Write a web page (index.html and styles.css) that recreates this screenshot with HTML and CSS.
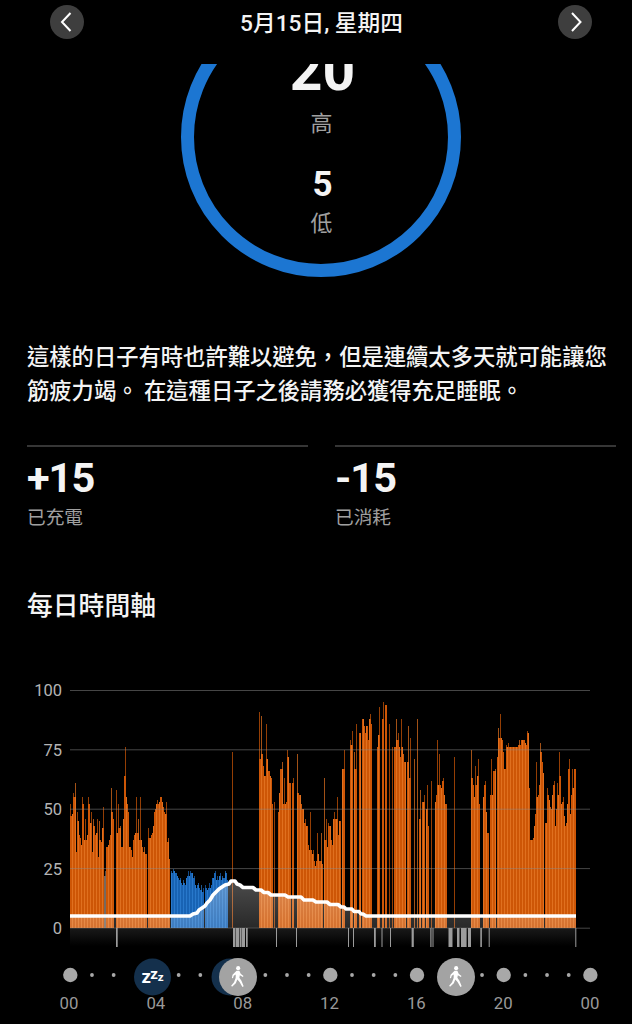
FILE: index.html
```html
<!DOCTYPE html>
<html lang="zh-Hant">
<head>
    <meta charset="UTF-8">
    <meta name="viewport" content="width=device-width, initial-scale=1.0">
    <title>每日時間軸</title>
    <link rel="stylesheet" href="styles.css">
</head>
<body>
    <header class="topbar">
        <button class="nav-button" aria-label="前一天">
            <svg width="34" height="34" viewBox="0 0 34 34"><path d="M20.5 8 L12 17 L20.5 26"/></svg>
        </button>
        <h1>5月15日, 星期四</h1>
        <button class="nav-button" aria-label="後一天">
            <svg width="34" height="34" viewBox="0 0 34 34"><path d="M14 8 L22.5 17 L14 26"/></svg>
        </button>
    </header>

    <section class="gauge">
        <div class="ring">
            <span class="high">20</span>
            <span class="caption">高</span>
            <span class="low">5</span>
            <span class="caption">低</span>
        </div>
    </section>

    <p class="message">這樣的日子有時也許難以避免，但是連續太多天就可能讓您筋疲力竭。 在這種日子之後請務必獲得充足睡眠。</p>

    <section class="totals">
        <div class="total">
            <strong>+15</strong>
            <span>已充電</span>
        </div>
        <div class="total">
            <strong>-15</strong>
            <span>已消耗</span>
        </div>
    </section>

    <h2>每日時間軸</h2>

    <section class="timeline">
        <div class="scale">
            <span>100</span>
            <span>75</span>
            <span>50</span>
            <span>25</span>
            <span>0</span>
        </div>
        <svg id="chart" width="524" height="320" viewBox="68 680 524 320">
            <defs>
                <linearGradient id="under_line" gradientUnits="userSpaceOnUse" x1="0" y1="880" x2="0" y2="928">
                    <stop offset="0" stop-color="#fff" stop-opacity="0.3"/>
                    <stop offset="1" stop-color="#fff" stop-opacity="0.16"/>
                </linearGradient>
                <linearGradient id="below_zero" x1="0" y1="0" x2="0" y2="1">
                    <stop offset="0" stop-color="#181818"/>
                    <stop offset="1" stop-color="#000"/>
                </linearGradient>
                <symbol id="walker" viewBox="0 0 20 24">
                    <circle cx="10.7" cy="2.8" r="2.2"/>
                    <path d="M9 5.6 L12 5.6 L13.4 8.8 L16.4 11.2 L15.7 12.2 L12.5 10.3 L12 13 L14.2 16.3 L16.6 22.2 L15.2 22.8 L12.2 17.6 L9.8 15 L8.2 18.8 L4.2 22.6 L3.2 21.6 L6.3 17.8 L8 13.2 L8.1 9.6 L6 10.8 L5.2 13.6 L4 13.4 L4.7 9.8 Z"/>
                </symbol>
            </defs>
            <rect x="70" y="929" width="506" height="17" fill="url(#below_zero)"/>
            <g id="bars" shape-rendering="crispEdges"></g>
            <g class="grid">
                <path d="M70 690.5H590M70 749.8H590M70 809.2H590M70 868.6H590M70 928.2H590"/>
            </g>
            <g id="ticks"></g>
            <g id="energy"></g>
            <g id="dots"></g>
            <circle cx="152.5" cy="977" r="18.5" class="sleep"/>
            <g class="zzz">
                <text x="141.5" y="983" font-size="18.5">z</text>
                <text x="150.3" y="978.7" font-size="15">z</text>
                <text x="157.8" y="981" font-size="11.5">z</text>
            </g>
            <circle cx="230" cy="977" r="18.5" class="sleep"/>
            <circle cx="238" cy="977" r="19" class="walk"/>
            <use href="#walker" x="227.5" y="965.5" width="20" height="22.5" fill="#fff"/>
            <circle cx="456" cy="977" r="19" class="walk"/>
            <use href="#walker" x="445.5" y="965.5" width="20" height="22.5" fill="#fff"/>
        </svg>
    </section>

    <div class="hours">
        <span>00</span>
        <span>04</span>
        <span>08</span>
        <span>12</span>
        <span>16</span>
        <span>20</span>
        <span>00</span>
    </div>

    <script src="chart.js"></script>
</body>
</html>
```

FILE: styles.css
```css
* {
    box-sizing: border-box;
}

body {
    margin: 0;
    height: 1024px;
    overflow: hidden;
    background-color: #000;
    color: #f4f4f4;
    font-family: Roboto, "Noto Sans CJK TC", sans-serif;
}

.topbar {
    display: flex;
    align-items: center;
    justify-content: space-between;
    height: 64px;
    padding: 0 40px 21px 50px;
}

.topbar h1 {
    margin: 0;
    padding: 4px 0 0 1px;
    font-size: 22.7px;
    line-height: 34px;
    font-weight: 500;
}

.nav-button {
    width: 34px;
    height: 34px;
    padding: 0;
    border: none;
    border-radius: 50%;
    background-color: #3e3e3e;
}

.nav-button svg {
    display: block;
    fill: none;
    stroke: #fff;
    stroke-width: 2;
}

.gauge {
    height: 276px;
    overflow: hidden;
}

.ring {
    display: flex;
    flex-direction: column;
    align-items: center;
    width: 280px;
    height: 280px;
    margin: -67px 0 0 181px;
    padding-top: 31px;
    border: 13px solid #1c76d2;
    border-radius: 50%;
}

.high {
    height: 66px;
    font-size: 57px;
    line-height: 60px;
    font-weight: 700;
    padding-left: 3px;
}

.low {
    margin-top: 23px;
    height: 43px;
    font-size: 35px;
    line-height: 42px;
    font-weight: 700;
    padding-left: 3px;
}

.caption {
    height: 34px;
    padding-left: 1px;
    font-size: 22px;
    line-height: 34px;
    color: #a0a0a0;
}

.message {
    margin: 0 20px 0 27px;
    font-size: 22.3px;
    line-height: 34px;
    font-weight: 500;
    height: 105px;
}

.totals {
    display: grid;
    grid-template-columns: 281px 281px;
    gap: 27px;
    margin-left: 27px;
}

.total {
    display: flex;
    flex-direction: column;
    height: 143px;
    border-top: 2px solid #363636;
}

.total strong {
    padding-top: 6px;
    font-size: 41.5px;
    line-height: 50px;
    letter-spacing: -1px;
}

.total span {
    font-size: 18.7px;
    line-height: 30px;
    color: #a0a0a0;
}

h2 {
    margin: 0 0 0 27px;
    height: 92px;
    padding-top: 1px;
    font-size: 25.8px;
    line-height: 34px;
    font-weight: 500;
}

.timeline {
    display: flex;
    gap: 6px;
    height: 310px;
}

.scale {
    display: flex;
    flex-direction: column;
    justify-content: space-between;
    width: 62px;
    height: 259px;
    padding-top: 1px;
    text-align: right;
    font-size: 16.5px;
    line-height: 20px;
    color: #b4b4b4;
}

#chart {
    overflow: visible;
}

.grid path {
    stroke: #8c8c8c;
    stroke-opacity: 0.5;
    fill: none;
}

.sleep {
    fill: #14304c;
}

.walk {
    fill: #a3a3a3;
}

.zzz {
    fill: #fff;
    font-weight: 700;
}

.hours {
    display: flex;
    justify-content: space-between;
    width: 541px;
    margin-left: 59px;
    padding-top: 3px;
    font-size: 16.8px;
    line-height: 20px;
    color: #999;
}

.hours span {
    width: 20px;
    text-align: center;
}
```

FILE: chart.js
```javascript
const SVG_NS = "http://www.w3.org/2000/svg";
const ZERO = 928;
const UNIT = 2.377;

// start position, then one stress level per step; 0 is a gap
const stress = [
    [70, 52, 47, 48, 57, 55, 61, 32, 49, 45, 39, 38, 35, 55, 52, 37, 46, 37, 39, 55, 52, 44, 49, 32, 46, 43, 39, 40, 46, 30, 45, 37, 36, 42, 51],
    [106, 34, 34, 35, 37, 39, 59, 49, 46, 0, 0, 58, 40, 52, 42, 43, 34, 34, 46, 64, 76, 55, 52, 49, 34, 34, 33, 30, 37, 39, 40, 55, 40, 46, 37, 55, 37, 34, 32, 34, 31, 31, 0, 42, 38, 38, 39, 40, 43, 49, 50, 52, 54, 52, 53, 55, 55, 53, 51, 49, 48, 53, 36, 38, 29],
    [232, 74],
    [259, 91, 71, 89, 73, 68, 64, 64, 86, 71, 66, 66, 64, 63, 52, 0, 53, 0, 0, 0, 49, 57, 67, 67, 70, 52, 63, 52, 53, 75, 72, 61, 61, 0, 61, 63, 0, 0, 0, 73, 57, 56, 56, 52, 50, 50, 44, 46, 43, 43, 35, 33, 49, 33, 31, 33, 28, 26, 28, 40, 31, 28, 28, 40, 27, 0, 63, 37, 46, 34, 44, 43, 43, 37, 35, 46, 49, 46, 46, 55, 39, 45, 45, 0, 67, 67, 75],
    [350, 79, 77, 83, 0, 74, 67, 86, 0, 0, 82, 82, 0, 88, 88, 85, 82, 85, 85, 79, 88, 90, 86],
    [377, 76, 81, 93, 0, 0, 88, 95, 0, 94, 94, 0, 0, 86, 0, 0, 76, 0, 76, 76, 88, 79, 82, 76, 72, 88, 76, 73, 70, 70, 0, 70, 85, 63, 80],
    [414, 71, 0, 0, 88, 0, 46, 58, 0, 53, 53, 56, 0, 50, 60, 43, 0, 0, 62],
    [435, 53, 56, 79, 60, 73, 60, 59, 62, 63, 56, 52, 52],
    [454, 72],
    [471, 75, 63, 60, 55, 68, 60, 64, 71, 52, 0, 0, 0, 55, 60, 62, 49, 40, 40, 0, 56, 71, 56, 66, 66, 67, 0, 72, 84, 80, 90, 80, 79, 74, 67, 67, 77, 76, 78, 76, 76, 76, 76, 76, 76, 76, 76, 76, 77, 79, 77, 79, 79, 79, 79, 78, 77, 83, 82, 59, 37, 37, 37, 38, 43, 48, 70, 55, 56, 60, 78, 74, 70, 65, 0, 44, 44, 59, 56, 54, 51, 50, 56, 60, 62, 43, 50, 61, 56, 74, 64, 52, 53, 55, 47, 43, 44, 52, 67, 71, 48, 56, 67, 59, 67, 67]
];

const light = [[104, 22, 24]];

const rest = [
    [171, 24, 23, 25, 24, 23, 23, 22, 21, 20, 21, 19, 18, 20, 19, 18, 21, 22, 24, 22, 24, 23, 23, 21, 22, 18, 17, 18, 19, 17, 16, 18, 15, 17, 0, 18, 17, 16, 17, 19, 17, 18, 21, 21, 23, 24, 20, 22, 20, 22, 23, 20, 22, 21, 21, 24, 23, 20]
];

const ticks = [
    [116, 1.7], [233, 2.5], [236, 3], [239.6, 2], [242, 3], [246, 1.7], [276, 1], [296, 1],
    [348, 1], [353, 1], [374, 1.8], [381.5, 1], [390, 1], [411.6, 2.2], [430.3, 1.2], [432.5, 1],
    [448.5, 4], [457, 2.5], [461, 5.6], [468, 3], [480.3, 1.6], [488.7, 1], [575.3, 1]
];

// body battery, x and y of each step
const energy = [
    [70, 916], [190, 916], [193, 914], [197, 913], [199, 910], [202, 908], [205, 906], [207, 903], [210, 900],
    [213, 895], [216, 892], [219, 889], [222, 887], [225, 885], [229, 884], [231, 881], [235, 881], [237, 884],
    [240, 885], [243, 887.5], [253, 887.5], [256, 890], [261, 890], [264, 892.5], [268, 892.5], [271, 895],
    [285, 895], [288, 897], [301, 897], [304, 900], [313, 900], [316, 902], [327, 902], [330, 904.5], [338, 904.5],
    [341, 907], [344, 907], [346, 909], [352, 909], [354, 911.5], [359, 911.5], [361, 914], [363, 914], [366, 916], [576, 916]
];

function add(parent, name, attributes) {
    const element = document.createElementNS(SVG_NS, name);
    for (const key in attributes) {
        element.setAttribute(key, attributes[key]);
    }
    document.getElementById(parent).appendChild(element);
}

function addBar(x, from, to, fill, opacity) {
    add("bars", "rect", {
        x: x,
        y: ZERO - Math.round(to * UNIT),
        width: 1,
        height: Math.round(to * UNIT) - Math.round(from * UNIT),
        fill: fill,
        opacity: opacity
    });
}

function drawBars(runs, colors) {
    runs.forEach((run) => {
        const start = run[0];
        const levels = run.slice(1);
        levels.forEach((level, i) => {
            if (!level) return;
            const x = start + i;
            const fill = colors[x % 3 === 0 ? 1 : 0];
            const side = Math.max(levels[i - 1] || 0, levels[i + 1] || 0);
            const solid = Math.min(level, side);
            addBar(x, 0, solid, fill, 1);
            // lone peaks are fainter than the mass of bars
            if (level > solid) addBar(x, solid, level, fill, 0.72);
        });
    });
}

drawBars(stress, ["#cd5606", "#e0701f"]);
drawBars(light, ["#77695f", "#77695f"]);
drawBars(rest, ["#1863b4", "#2878cb"]);

ticks.forEach(([x, width]) => {
    add("ticks", "rect", { x: x, y: 928, width: width, height: 19, fill: "#9c9c9c" });
});

const line = energy.map((point) => point.join(" ")).join(" L");
add("energy", "path", { d: `M70 928 L${line} L576 928 Z`, fill: "url(#under_line)" });
add("energy", "path", { d: `M${line}`, fill: "none", stroke: "#fff", "stroke-width": 3.6, "stroke-linejoin": "round" });

// these hours lie under an activity badge
const covered = [3, 4, 7, 8, 17, 18];

for (let hour = 0; hour <= 24; hour++) {
    if (covered.includes(hour)) continue;
    add("dots", "circle", {
        cx: 70.3 + hour * 21.67,
        cy: 975,
        r: hour % 4 === 0 ? 7.2 : 1.9,
        fill: "#a8a8a8"
    });
}
```
